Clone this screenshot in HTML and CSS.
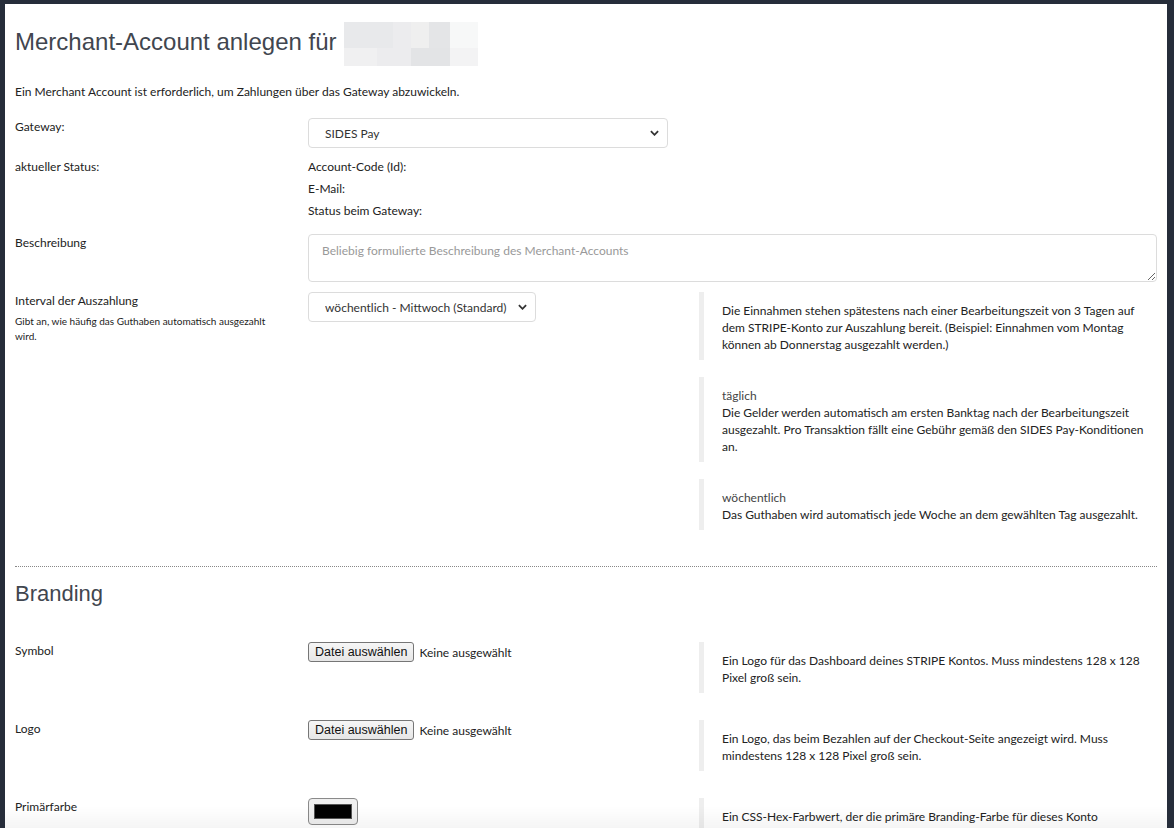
FILE: index.html
```html
<!DOCTYPE html>
<html lang="de">
<head>
    <meta charset="UTF-8">
    <meta name="viewport" content="width=device-width, initial-scale=1.0">
    <title>Merchant-Account anlegen</title>
    <link rel="stylesheet" href="styles.css">
</head>
<body>
    <div class="panel">
        <h1 class="page-title"><span class="title-text">Merchant-Account anlegen für</span><span class="blur"></span></h1>
        <p class="intro">Ein Merchant Account ist erforderlich, um Zahlungen über das Gateway abzuwickeln.</p>

        <div class="row">
            <label class="label" for="gateway">Gateway:</label>
            <div class="control">
                <div class="select-wrap gateway">
                    <select id="gateway" name="gateway">
                        <option>SIDES Pay</option>
                    </select>
                    <svg class="chevron" viewBox="0 0 10 6" width="9" height="6"><path d="M1 1 L5 5 L9 1" /></svg>
                </div>
            </div>
        </div>

        <div class="row">
            <div class="label">aktueller Status:</div>
            <div class="control">
                <div class="value">Account-Code (Id):</div>
                <div class="value">E-Mail:</div>
                <div class="value">Status beim Gateway:</div>
            </div>
        </div>

        <div class="row">
            <label class="label" for="description">Beschreibung</label>
            <div class="control full">
                <textarea id="description" name="description" placeholder="Beliebig formulierte Beschreibung des Merchant-Accounts"></textarea>
            </div>
        </div>

        <div class="row">
            <div class="label">
                <label for="interval">Interval der Auszahlung</label>
                <div class="sublabel">Gibt an, wie häufig das Guthaben automatisch ausgezahlt wird.</div>
            </div>
            <div class="control">
                <div class="select-wrap interval">
                    <select id="interval" name="interval">
                        <option>wöchentlich - Mittwoch (Standard)</option>
                        <option>täglich</option>
                    </select>
                    <svg class="chevron" viewBox="0 0 10 6" width="9" height="6"><path d="M1 1 L5 5 L9 1" /></svg>
                </div>
            </div>
            <div class="help">
                <div class="note">Die Einnahmen stehen spätestens nach einer Bearbeitungszeit von 3 Tagen auf dem STRIPE-Konto zur Auszahlung bereit. (Beispiel: Einnahmen vom Montag können ab Donnerstag ausgezahlt werden.)</div>
                <div class="note">
                    <div class="note-title">täglich</div>
                    Die Gelder werden automatisch am ersten Banktag nach der Bearbeitungszeit ausgezahlt. Pro Transaktion fällt eine Gebühr gemäß den SIDES Pay-Konditionen an.
                </div>
                <div class="note">
                    <div class="note-title">wöchentlich</div>
                    Das Guthaben wird automatisch jede Woche an dem gewählten Tag ausgezahlt.
                </div>
            </div>
        </div>

        <hr class="divider">

        <h2 class="section-title">Branding</h2>

        <div class="row">
            <div class="label">Symbol</div>
            <div class="control">
                <div class="file">
                    <button type="button" class="file-btn">Datei auswählen</button>
                    <span class="file-name">Keine ausgewählt</span>
                </div>
            </div>
            <div class="help">
                <div class="note">Ein Logo für das Dashboard deines STRIPE Kontos. Muss mindestens 128 x 128 Pixel groß sein.</div>
            </div>
        </div>

        <div class="row">
            <div class="label">Logo</div>
            <div class="control">
                <div class="file">
                    <button type="button" class="file-btn">Datei auswählen</button>
                    <span class="file-name">Keine ausgewählt</span>
                </div>
            </div>
            <div class="help">
                <div class="note">Ein Logo, das beim Bezahlen auf der Checkout-Seite angezeigt wird. Muss mindestens 128 x 128 Pixel groß sein.</div>
            </div>
        </div>

        <div class="row">
            <label class="label" for="primary">Primärfarbe</label>
            <div class="control">
                <input type="color" id="primary" name="primary" value="#000000" class="color">
            </div>
            <div class="help">
                <div class="note">Ein CSS-Hex-Farbwert, der die primäre Branding-Farbe für dieses Konto repräsentiert.</div>
            </div>
        </div>
    </div>
    <div class="fade"></div>
</body>
</html>
```

FILE: styles.css
```css
html, body {
    margin: 0;
    background-color: #262d3a;
}
body {
    font-family: Lato, "Open Sans", sans-serif;
    font-size: 12px;
    color: #222;
}
.panel {
    background-color: #fff;
    margin: 4px 7px 0 5px;
    padding: 0 10px 60px;
}
.page-title {
    display: flex;
    align-items: flex-start;
    margin: 0;
    padding-top: 18px;
    font-family: "Liberation Sans", Arial, sans-serif;
    font-size: 24px;
    font-weight: normal;
    color: #41464f;
}
.title-text {
    margin-top: 6px;
}
/* pixelated name, blurred in the original */
.blur {
    width: 134px;
    height: 44px;
    margin-left: 7px;
    background:
        linear-gradient(to right, #e8e9eb 0 49px, #ececee 49px 67px, #efefef 67px 85px, #e4e5e7 85px 106px, #f7f8f8 106px) top / 100% 26px no-repeat,
        linear-gradient(to right, #f0f0f1 0 33px, #ececee 33px 67px, #e3e4e6 67px 106px, #f3f3f4 106px) bottom / 100% 18px no-repeat;
}
.intro {
    margin: 17px 0 18px;
    line-height: 17px;
}
.row {
    display: grid;
    grid-template-columns: 293px 391px 1fr;
    align-items: start;
    margin-bottom: 10px;
    line-height: 17px;
}
.label {
    padding-right: 30px;
}
.sublabel {
    margin-top: 5px;
    font-size: 10px;
    line-height: 15px;
}
.control.full {
    grid-column: 2 / 4;
}
.value {
    margin-bottom: 5px;
}
.select-wrap {
    position: relative;
}
.select-wrap select {
    appearance: none;
    -webkit-appearance: none;
    display: block;
    width: 100%;
    height: 30px;
    padding: 0 18px 0 16px;
    border: 1px solid #dcdcdc;
    border-radius: 4px;
    background-color: #fff;
    font-family: Lato, sans-serif;
    font-size: 12px;
    color: #333;
}
.select-wrap.gateway {
    width: 360px;
}
.select-wrap.interval {
    width: 228px;
}
.chevron {
    position: absolute;
    right: 9px;
    top: 12px;
    fill: none;
    stroke: #333;
    stroke-width: 2;
    pointer-events: none;
}
textarea {
    display: block;
    box-sizing: border-box;
    width: 100%;
    height: 48px;
    padding: 8px 13px;
    border: 1px solid #dcdcdc;
    border-radius: 4px;
    font-family: Lato, sans-serif;
    font-size: 12px;
    color: #333;
}
textarea::placeholder {
    color: #999;
}
.help {
    padding-right: 8px;
}
.note {
    border-left: 5px solid #eee;
    padding: 10px 0 7px 18px;
    margin-bottom: 17px;
}
.note-title {
    color: #444;
}
.divider {
    border: none;
    border-top: 1px dotted #888;
    margin: 19px 0 14px;
}
.section-title {
    margin: 0 0 35px;
    font-family: "Liberation Sans", Arial, sans-serif;
    font-size: 22px;
    line-height: 26px;
    font-weight: normal;
    color: #41464f;
}
.file {
    display: flex;
    align-items: center;
}
.file-btn {
    height: 20px;
    padding: 0 6px;
    border: 1px solid #767676;
    border-radius: 3px;
    background: linear-gradient(#f6f6f6, #e6e6e6);
    font-family: "Liberation Sans", Arial, sans-serif;
    font-size: 12.5px;
    color: #111;
}
.file-name {
    margin-left: 5px;
}
.color {
    display: block;
    box-sizing: border-box;
    width: 50px;
    height: 27px;
    padding: 0;
    border: 1px solid #8a8a8a;
    border-radius: 4px;
    background-color: #efefef;
}
.color::-webkit-color-swatch-wrapper {
    padding: 5px 5px;
}
.color::-webkit-color-swatch {
    border: 1px solid #555;
    border-radius: 0;
}
.fade {
    position: fixed;
    left: 5px;
    right: 7px;
    bottom: 0;
    height: 22px;
    background: linear-gradient(rgba(0, 0, 0, 0), rgba(0, 0, 0, 0.04));
    pointer-events: none;
}
```
